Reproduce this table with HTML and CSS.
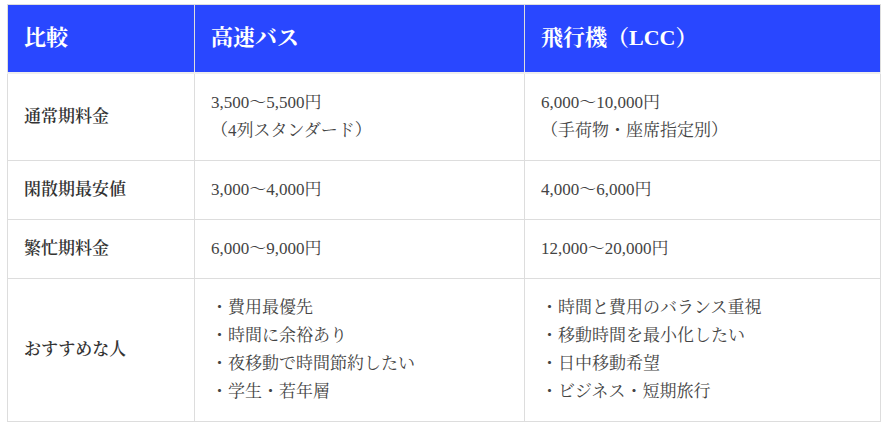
FILE: index.html
```html
<!DOCTYPE html>
<html lang="ja">
<head>
<meta charset="utf-8">
<title>比較表</title>
<link rel="stylesheet" href="styles.css">
</head>
<body>
<div class="wrap">
<table class="compare">
<colgroup>
<col class="c1"><col class="c2"><col class="c3">
</colgroup>
<thead>
<tr><th>比較</th><th>高速バス</th><th>飛行機（LCC）</th></tr>
</thead>
<tbody>
<tr class="r1"><td class="label">通常期料金</td><td>3,500～5,500円<br>（4列スタンダード）</td><td>6,000～10,000円<br>（手荷物・座席指定別）</td></tr>
<tr class="r2"><td class="label">閑散期最安値</td><td>3,000～4,000円</td><td>4,000～6,000円</td></tr>
<tr class="r3"><td class="label">繁忙期料金</td><td>6,000～9,000円</td><td>12,000～20,000円</td></tr>
<tr class="r4"><td class="label">おすすめな人</td><td>・費用最優先<br>・時間に余裕あり<br>・夜移動で時間節約したい<br>・学生・若年層</td><td>・時間と費用のバランス重視<br>・移動時間を最小化したい<br>・日中移動希望<br>・ビジネス・短期旅行</td></tr>
</tbody>
</table>
</div>
</body>
</html>
```

FILE: styles.css
```css
html, body {
  margin: 0;
  padding: 0;
  background: #ffffff;
}
body {
  font-family: "Liberation Serif", "Noto Serif CJK JP", "Noto Sans CJK JP", serif;
  color: #444444;
}
.wrap {
  padding: 4px 3px 0 7px;
}
.compare {
  width: 873px;
  border-collapse: collapse;
  table-layout: fixed;
  border: 1px solid #dddddd;
}
.c1 { width: 187px; }
.c2 { width: 330px; }
.c3 { width: 356px; }
.compare th {
  background: #2947ff;
  color: #ffffff;
  font-size: 22px;
  font-weight: bold;
  text-align: left;
  line-height: 34px;
  height: 68px;
  padding: 0 16px;
  box-sizing: border-box;
  border-left: 1px solid #dddddd;
  border-bottom: 2px solid #eeeeee;
  vertical-align: middle;
}
.compare td {
  font-size: 17px;
  line-height: 28px;
  padding: 15px 16px;
  border: 1px solid #dddddd;
  vertical-align: middle;
  color: #444444;
}
.compare td.label {
  font-weight: 600;
  color: #333333;
}
```
